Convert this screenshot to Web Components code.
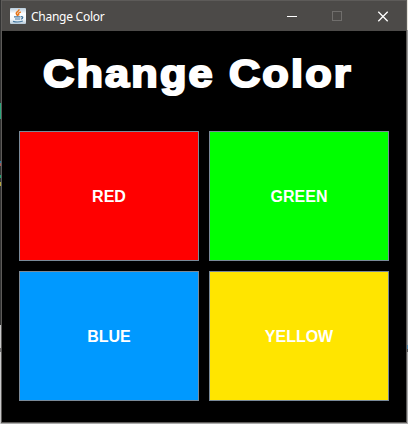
<!DOCTYPE html>
<html lang="en"><head><meta charset="utf-8"><title>Change Color</title>
<style>html,body{margin:0;width:408px;height:424px;overflow:hidden;background:#333}</style></head>
<body><app-window></app-window>
<script>
const define=(name,html)=>customElements.define(name,class extends HTMLElement{
  constructor(){super();this.attachShadow({mode:'open'}).innerHTML=html;}
});
define('java-icon',`<style>:host{display:block;width:16px;height:16px}svg{display:block}</style>
<svg width="16" height="16" viewBox="0 0 16 16"><defs><linearGradient id="g" x2="0" y2="1"><stop stop-color="#b9cddd"/><stop offset=".35" stop-color="#fff"/><stop offset=".7" stop-color="#f4f8fb"/><stop offset="1" stop-color="#b4c8d8"/></linearGradient></defs>
<rect width="16" height="16" rx="1" fill="url(#g)"/><path d="M8.9 1.3C9.8 3.5 4.9 4.1 6.6 6.2L7.9 8M10.8 4C7.6 5.2 8.1 5.8 9 7.4" fill="none" stroke="#e8761a" stroke-width="1.5"/>
<path d="M4 8.9H10.5M5 11H10M3 13.4Q8 14.8 12.8 13M11 8.8C13.4 8.2 13.4 10.7 10.8 11.2" fill="none" stroke="#44779f" stroke-width="1.2"/></svg>`);
define('title-bar',`<style>:host{display:flex;box-sizing:border-box;height:31px;padding:1px 0 0 8px;background:#4c4a48;border-top:1px solid #5d5b59;align-items:center;color:#fff;font:12px/16px "Noto Sans","Open Sans",sans-serif}
.t{margin-left:5px;flex:1;white-space:nowrap;letter-spacing:-.26px}java-icon{margin-bottom:2px}svg{display:block}</style>
<java-icon></java-icon><span class="t"><slot></slot></span>
<svg width="138" height="28" viewBox="268 1 138 28" fill="none" shape-rendering="crispEdges"><path d="M287 14.5H297" stroke="#fff"/><path d="M332.5 9.5H341.5V18.5H332.5Z" stroke="#706e6c"/><path shape-rendering="auto" d="M378.3 9.8L387.7 19.2M387.7 9.8L378.3 19.2" stroke="#fff" stroke-width="1.3"/></svg>`);
define('color-button',`<style>:host{display:flex;box-sizing:border-box;border:1px solid #7a8a99;padding-top:2px;background:var(--fill);align-items:center;justify-content:center;color:#fff;font:bold 16px/18px "Liberation Sans",Arial,sans-serif}</style><slot></slot>`);
define('color-panel',`<style>:host{display:block;flex:1;background:#000;padding:0 17px}
h1{margin:0;height:100px;box-sizing:border-box;padding:20px 0 0 24px;color:#fff;font:bold 39px/46px "Liberation Sans",Arial,sans-serif;white-space:nowrap}
h1 span{display:inline-block;transform:scaleX(1.11);transform-origin:0 0;letter-spacing:1.95px;-webkit-text-stroke:2.1px #fff}
.grid{display:grid;grid-template-columns:180px 180px;grid-auto-rows:130px;gap:10px}</style>
<h1><span>Change Color</span></h1><div class="grid"><color-button style="--fill:#f00">RED</color-button><color-button style="--fill:#0f0">GREEN</color-button><color-button style="--fill:#09f">BLUE</color-button><color-button style="--fill:#ffe500">YELLOW</color-button></div>`);
define('app-window',`<style>:host{display:grid;grid-template-columns:1px 1fr 1px;width:408px;height:424px;background:#aaa}
.left{background:linear-gradient(#333 103px,#2aa57b 103px 119px,#333 119px 161px,#2878a0 161px 163px,#a65858 163px 166px,#333 166px 175px,#209e70 175px 178px,#333 178px 182px,#b5a53c 182px 186px,#333 186px 325px,#c9c9c9 325px 348px,#777 348px 352px,#c9c9c9 352px)}
.right{background:linear-gradient(#e4e2da 30px,#999 30px 345px,#5488aa 345px 349px,#555 349px 352px,#aaa 352px)}
.win{box-sizing:border-box;height:423px;display:flex;flex-direction:column;border:solid #5d5b59;border-width:0 1px 1px}</style><div class="left"></div><div class="win"><title-bar>Change Color</title-bar><color-panel></color-panel></div><div class="right"></div>`);
</script></body></html>
